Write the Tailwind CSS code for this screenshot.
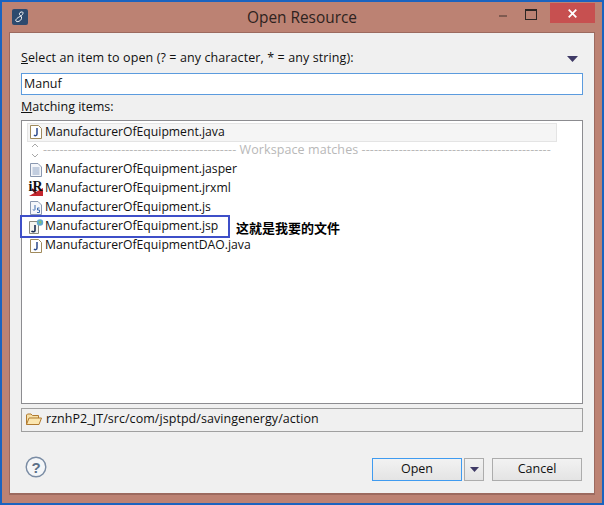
<!DOCTYPE html>
<html lang="en">
<head>
<meta charset="UTF-8">
<script src="https://cdn.jsdelivr.net/npm/@tailwindcss/browser@4"></script>
<title>Open Resource</title>
</head>
<body class="m-0 overflow-hidden">
<div class="w-[604px] h-[505px] border-2 border-[#1a63c0] bg-[#bc8273] flex flex-col font-['Open_Sans','Noto_Sans_CJK_SC',sans-serif] text-[12.5px] text-[#111]">
  <!-- title bar -->
  <div class="h-[30px] shrink-0 flex relative">
    <div class="ml-[10px] mt-[7px] w-4 h-4 rounded-[2px] bg-[#2d4a6e] flex items-center justify-center">
      <svg width="14" height="14" viewBox="0 0 14 14" fill="none" stroke="#fff" stroke-width="1"><path d="M9.5 2C7.5 1.500 6 3 6.500 4.500C7 6 9 6 8.500 8.500C8 11 4 12.500 3 11C2 9.500 5 7.500 7 6.500C9 5.500 11 3 9.500 2Z"/></svg>
    </div>
    <div class="absolute inset-x-0 top-[4px] text-center text-[15.400px] text-[#2e2220]">Open Resource</div>
    <div class="ml-auto flex items-start">
      <div class="w-[8px] h-[2px] bg-[#7f5a50] mt-[13px] mr-[18px]"></div>
      <div class="w-[10px] h-[8px] border border-[#2c2624] border-t-[2px] mt-[7px] mr-[13px] box-content"></div>
      <div class="w-[45px] h-[20px] mr-[7px] mt-[1px] bg-[#c75050] flex items-center justify-center">
        <svg width="9" height="9" viewBox="0 0 9 9" stroke="#fff" stroke-width="1.800"><path d="M0.700 0.700L8.300 8.300M8.300 0.700L0.700 8.300"/></svg>
      </div>
    </div>
  </div>
  <!-- dialog body -->
  <div class="mx-[7px] h-[463px] border border-[#9c6a5f] border-b-[2px] bg-[#f0f0f0] flex flex-col pl-[11px] pr-[11px]">
    <div class="flex justify-between items-center h-[40px] pt-[10px]">
      <span class="tracking-[0.1px]"><span class="underline">S</span>elect an item to open (? = any character, * = any string):</span>
      <svg class="mr-[5px] mt-[1px]" width="11" height="6" viewBox="0 0 11 6"><path d="M0 0H11L5.500 6Z" fill="#3f3a66"/></svg>
    </div>
    <div class="h-[22px] mt-[0px] border border-[#5b9bde] bg-white pl-[2px] leading-[20px]">Manuf</div>
    <div class="h-[25px] leading-[24px]"><span class="underline">M</span>atching items:</div>
    <!-- results list -->
    <div class="h-[284px] border border-[#8c8c90] bg-white relative pt-[2px] pl-[5px] overflow-visible text-[12.2px]">
      <div class="w-[530px] h-[19px] pb-[1px] bg-[#f5f5f5] border border-[#e4e4e4] flex items-center">
        <svg class="ml-[2px] mr-[3px]" width="12" height="14" viewBox="0 0 12 14"><path d="M.5.500H8.500L11.500 3.500V13.500H.5Z" fill="#fff" stroke="#a08a5c"/><path d="M7 3V9C7 11 5 11 4 10" fill="none" stroke="#2c4a8c" stroke-width="1.500"/></svg>
        <span>ManufacturerOfEquipment.java</span>
      </div>
      <div class="h-[19px] pb-[2px] flex items-center">
        <svg class="ml-[3px] mr-[3px]" width="10" height="17" viewBox="0 0 10 17" fill="none" stroke="#a8a8a8"><path d="M2 5L5 2L8 5M2 12L5 15L8 12"/></svg>
        <span class="text-[#b8b8b8] whitespace-nowrap text-[12.5px] tracking-[0.09px]">----------------------------------------------- Workspace matches ----------------------------------------------</span>
      </div>
      <div class="h-[19px] pb-[2px] flex items-center">
        <svg class="ml-[3px] mr-[3px]" width="12" height="14" viewBox="0 0 12 14"><path d="M.5.500H8L11.500 4V13.500H.5Z" fill="#f4f6fa" stroke="#8a98b0"/><path d="M2.500 5H9.500M2.500 7H9.500M2.500 9H9.500M2.500 11H9.500" stroke="#8fa4c4"/></svg>
        <span>ManufacturerOfEquipment.jasper</span>
      </div>
      <div class="h-[19px] pb-[2px] flex items-center">
        <svg class="ml-[1px] mr-[1px]" width="16" height="17" viewBox="0 0 16 17"><path d="M1 16L15 8V16Z" fill="#c4262e"/><path d="M4 9L8 13" stroke="#6a1414" stroke-width="2"/><text x="0.500" y="11" font-size="14" font-weight="700" font-family="Liberation Serif" fill="#111">iR</text></svg>
        <span>ManufacturerOfEquipment.jrxml</span>
      </div>
      <div class="h-[19px] pb-[2px] flex items-center">
        <svg class="ml-[3px] mr-[3px]" width="12" height="14" viewBox="0 0 12 14"><path d="M.5.500H8L11.500 4V13.500H.5Z" fill="#f4f6fa" stroke="#8a98b0"/><path d="M5 4V8.500C5 9.500 3 9.500 3 8.500M9.500 7H7.500V9H9.500V11.500H7" fill="none" stroke="#3f6cb0"/></svg>
        <span>ManufacturerOfEquipment.js</span>
      </div>
      <div class="h-[19px] pb-[2px] flex items-center">
        <svg class="ml-[2px] mr-[1px]" width="15" height="15" viewBox="0 0 15 15"><path d="M.5 2.500H9.500V14.500H.5Z" fill="#f4f4f0" stroke="#8a8a80"/><path d="M6 6V11.500C6 13 3.500 13 2.500 12" fill="none" stroke="#1c2c50" stroke-width="1.600"/><circle cx="11" cy="3.500" r="3.200" fill="#5fa8d0"/><path d="M9.500 2.500L12 1.500L12.500 4L10.500 5Z" fill="#7fbf70"/></svg>
        <span>ManufacturerOfEquipment.jsp</span>
      </div>
      <div class="h-[19px] pb-[2px] flex items-center">
        <svg class="ml-[3px] mr-[3px]" width="12" height="14" viewBox="0 0 12 14"><path d="M.5.500H8.500L11.500 3.500V13.500H.5Z" fill="#fff" stroke="#a08a5c"/><path d="M7 3V9C7 11 5 11 4 10" fill="none" stroke="#2c4a8c" stroke-width="1.500"/></svg>
        <span>ManufacturerOfEquipmentDAO.java</span>
      </div>
      <!-- annotation drawn over the list -->
      <div class="absolute left-[-2px] top-[94px] w-[210px] h-[23px] border-2 border-[#3e4fc8]"></div>
      <div class="absolute left-[214px] top-[97px] text-[13px] font-bold text-black whitespace-nowrap font-['Noto_Sans_CJK_SC',sans-serif]">这就是我要的文件</div>
    </div>
    <div class="h-[24px] mt-[4px] pb-[1px] border border-[#a0a0a0] flex items-center pl-[4px]">
      <svg class="mr-[4px]" width="16" height="13" viewBox="0 0 16 13"><path d="M.5 11.500V2L1.500 1H5L6.500 2.500H12.500V5" fill="#f6e0a8" stroke="#b07a30"/><path d="M.5 11.500L3 5H15.500L13 11.500Z" fill="#fbe6b0" stroke="#b07a30"/></svg>
      <span class="tracking-[0.05px]">rznhP2_JT/src/com/jsptpd/savingenergy/action</span>
    </div>
    <div class="flex items-center mt-[26px]">
      <svg class="ml-[4px] -mt-[3px] mb-[3px]" width="22" height="22" viewBox="0 0 22 22"><circle cx="11" cy="11" r="9.800" fill="#f4f6f8" stroke="#7a8ca4" stroke-width="1.400"/><text x="11" y="16.500" text-anchor="middle" font-size="15" font-weight="700" font-family="Liberation Sans" fill="#5c7088">?</text></svg>
      <div class="ml-auto flex items-center">
        <button class="w-[90px] h-[23px] border border-[#3f9bf0] bg-gradient-to-b from-[#f2f2f2] to-[#e4e4e4]">Open</button>
        <button class="w-[20px] h-[23px] ml-[2px] border border-[#acacac] bg-gradient-to-b from-[#f2f2f2] to-[#e4e4e4] flex items-center justify-center">
          <svg width="9" height="5" viewBox="0 0 9 5"><path d="M0 0H9L4.500 5Z" fill="#3f3a66"/></svg>
        </button>
        <button class="w-[90px] h-[23px] ml-[8px] mr-[1px] border border-[#acacac] bg-gradient-to-b from-[#f2f2f2] to-[#e4e4e4]">Cancel</button>
      </div>
    </div>
  </div>
</div>
</body>
</html>
